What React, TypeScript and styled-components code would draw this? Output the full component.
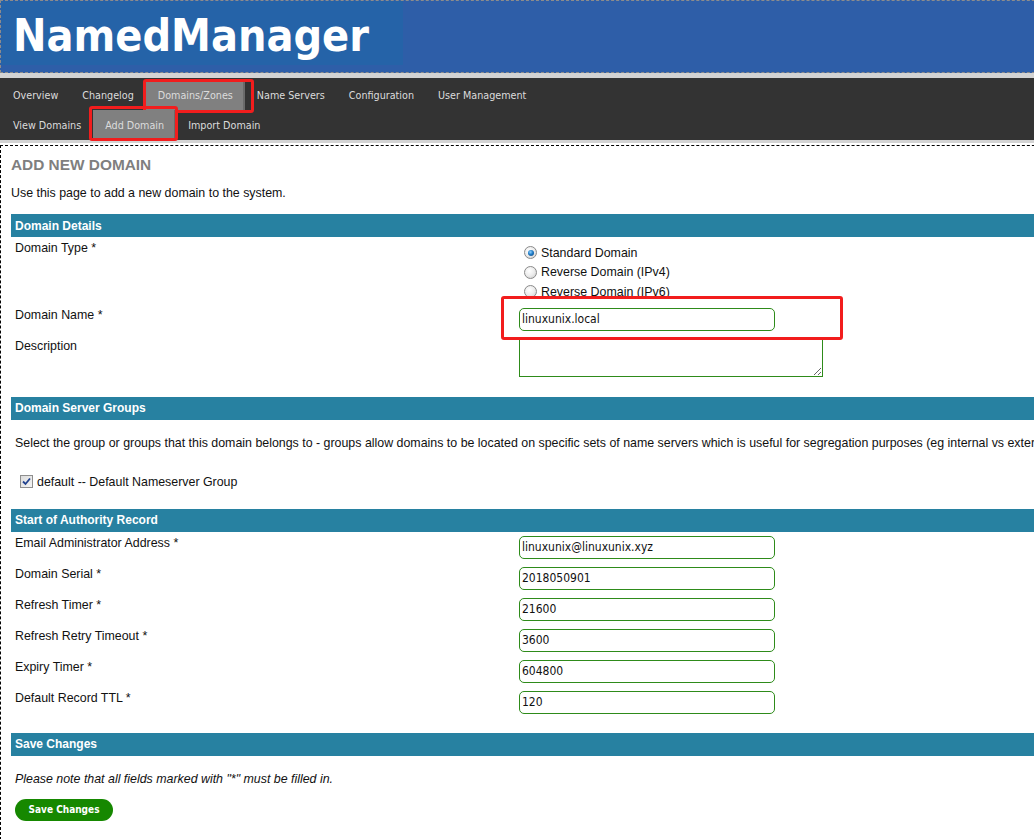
import React from "react";
import styled, { createGlobalStyle } from "styled-components";

const GlobalStyle = createGlobalStyle`
  html, body {
    margin: 0;
    padding: 0;
    background: #ffffff;
    overflow: hidden;
  }
  body {
    font-family: "Liberation Sans", Arial, sans-serif;
    font-size: 12.4px;
    color: #111;
  }
`;

const Page = styled.div`
  width: 1100px;
  min-height: 839px;
  display: flex;
  flex-direction: column;
`;

const Header = styled.header`
  height: 71px;
  border: 1px dashed #8c8c8c;
  background: #2e5ea8;
`;

const Logo = styled.div`
  width: 402px;
  height: 64px;
  box-sizing: border-box;
  padding: 13px 0 0 12px;
  background: #2563a8;
`;

const Title = styled.h1`
  margin: 0;
  font-family: "DejaVu Sans Condensed", "DejaVu Sans", sans-serif;
  font-stretch: condensed;
  font-weight: bold;
  font-size: 44.5px;
  line-height: 44px;
  color: #ffffff;
`;

const NavBand = styled.div`
  background: #d3d3d3;
  padding: 5px 0 3px;
`;

const NavBar = styled.nav`
  background: #333333;
  padding-top: 2px;
`;

const NavRow = styled.div`
  display: flex;
  height: 30px;
  padding-left: 1px;
`;

const NavItem = styled.div<{ $active?: boolean }>`
  position: relative;
  display: flex;
  align-items: center;
  padding: 0 12px;
  font-family: "DejaVu Sans Condensed", "DejaVu Sans", sans-serif;
  font-stretch: condensed;
  font-size: 10.7px;
  color: #dcdcdc;
  background: ${(p) => (p.$active ? "#808080" : "transparent")};
  box-shadow: ${(p) => (p.$active ? "inset -2px 0 0 #6a6a6a" : "none")};
`;

const Highlight = styled.span<{ $t: number; $r: number; $b: number; $l: number }>`
  position: absolute;
  top: ${(p) => p.$t}px;
  right: ${(p) => p.$r}px;
  bottom: ${(p) => p.$b}px;
  left: ${(p) => p.$l}px;
  border: 3px solid #f21d1d;
  border-radius: 3px;
  pointer-events: none;
`;

const Content = styled.main`
  flex: 1;
  margin-top: 2px;
  border-top: 1px dashed #000;
  border-left: 1px dashed #000;
  padding: 10px 0 0 10px;
`;

const Heading = styled.h2`
  margin: 0;
  font-size: 15.4px;
  line-height: 18px;
  font-weight: bold;
  color: #7f7f7f;
`;

const Intro = styled.p`
  margin: 12px 0 14px;
  line-height: 14px;
`;

const Section = styled.section`
  margin-bottom: 15px;
`;

const Bar = styled.div`
  height: 23px;
  display: flex;
  align-items: center;
  padding-left: 4px;
  background: #2781a1;
  color: #ffffff;
  font-weight: bold;
  font-size: 12px;
`;

const FormRow = styled.div`
  display: grid;
  grid-template-columns: 504px 1fr;
`;

const Cell = styled.div<{ $pad?: string }>`
  padding: ${(p) => p.$pad ?? "4px"};
  line-height: 14px;
`;

const RadioLine = styled.label`
  display: flex;
  align-items: center;
  height: 19.5px;
`;

const Radio = styled.span<{ $checked?: boolean }>`
  position: relative;
  width: 11px;
  height: 11px;
  margin: 0 4px 0 5px;
  border-radius: 50%;
  border: 1px solid #8a8a8a;
  background: radial-gradient(circle at 40% 35%, #ffffff 0%, #ececec 50%, #c9c9c9 100%);
  &::after {
    content: "";
    display: ${(p) => (p.$checked ? "block" : "none")};
    position: absolute;
    top: 2.5px;
    left: 2.5px;
    width: 6px;
    height: 6px;
    border-radius: 50%;
    background: radial-gradient(circle at 40% 35%, #8fd0ff 0%, #1f7cc6 45%, #0b3f78 100%);
  }
`;

const TextInput = styled.input`
  display: block;
  box-sizing: border-box;
  width: 256px;
  height: 23px;
  margin: 0;
  padding: 0 2px;
  border: 1px solid #2e8b1a;
  border-radius: 5px;
  font-family: "DejaVu Sans Condensed", "DejaVu Sans", sans-serif;
  font-stretch: condensed;
  font-size: 12px;
  color: #111;
  background: #fff;
  outline: none;
`;

const InputWrap = styled.div`
  position: relative;
  width: 256px;
`;

const TextArea = styled.textarea`
  display: block;
  box-sizing: border-box;
  width: 304px;
  height: 38px;
  margin: 0 0 1px;
  padding: 2px;
  border: 1px solid #2e8b1a;
  border-radius: 0;
  font-family: "DejaVu Sans Condensed", "DejaVu Sans", sans-serif;
  font-size: 12px;
  outline: none;
`;

const Wide = styled.p`
  margin: 12px 0;
  white-space: nowrap;
`;

const CheckLine = styled.label`
  display: flex;
  align-items: center;
  height: 16px;
`;

const CheckBox = styled.span`
  display: flex;
  align-items: center;
  justify-content: center;
  box-sizing: border-box;
  width: 13px;
  height: 13px;
  margin: 0 4px 0 5px;
  border: 1px solid #8e8e8e;
  background: linear-gradient(135deg, #dcdcdc 0%, #f4f4f4 100%);
`;

const Note = styled.p`
  margin: 12px 0 13px;
  font-style: italic;
`;

const SaveButton = styled.button`
  width: 98px;
  height: 22px;
  padding: 0;
  border: none;
  border-radius: 11px;
  background: #168800;
  color: #ffffff;
  font-family: "DejaVu Sans Condensed", "DejaVu Sans", sans-serif;
  font-stretch: condensed;
  font-weight: bold;
  font-size: 10px;
`;

const soaRows: [string, string][] = [
  ["Email Administrator Address *", "linuxunix@linuxunix.xyz"],
  ["Domain Serial *", "2018050901"],
  ["Refresh Timer *", "21600"],
  ["Refresh Retry Timeout *", "3600"],
  ["Expiry Timer *", "604800"],
  ["Default Record TTL *", "120"],
];

export default function App() {
  return (
    <>
      <GlobalStyle />
      <Page>
        <Header>
          <Logo>
            <Title>NamedManager</Title>
          </Logo>
        </Header>
        <NavBand>
          <NavBar>
            <NavRow>
              <NavItem>Overview</NavItem>
              <NavItem>Changelog</NavItem>
              <NavItem $active>
                Domains/Zones
                <Highlight $t={-1} $r={-9} $b={-3} $l={-3} />
              </NavItem>
              <NavItem>Name Servers</NavItem>
              <NavItem>Configuration</NavItem>
              <NavItem>User Management</NavItem>
            </NavRow>
            <NavRow>
              <NavItem>View Domains</NavItem>
              <NavItem $active>
                Add Domain
                <Highlight $t={-4} $r={-2} $b={-1} $l={-4} />
              </NavItem>
              <NavItem>Import Domain</NavItem>
            </NavRow>
          </NavBar>
        </NavBand>
        <Content>
          <Heading>ADD NEW DOMAIN</Heading>
          <Intro>Use this page to add a new domain to the system.</Intro>

          <Section>
            <Bar>Domain Details</Bar>
            <FormRow>
              <Cell>Domain Type *</Cell>
              <Cell $pad="6px 4px 2px">
                <RadioLine>
                  <Radio $checked />
                  Standard Domain
                </RadioLine>
                <RadioLine>
                  <Radio />
                  Reverse Domain (IPv4)
                </RadioLine>
                <RadioLine>
                  <Radio />
                  Reverse Domain (IPv6)
                </RadioLine>
              </Cell>
            </FormRow>
            <FormRow>
              <Cell>Domain Name *</Cell>
              <Cell>
                <InputWrap>
                  <TextInput defaultValue="linuxunix.local" />
                  <Highlight $t={-12} $r={-68} $b={-9} $l={-18} />
                </InputWrap>
              </Cell>
            </FormRow>
            <FormRow>
              <Cell>Description</Cell>
              <Cell>
                <TextArea />
              </Cell>
            </FormRow>
          </Section>

          <Section>
            <Bar>Domain Server Groups</Bar>
            <Cell>
              <Wide>
                Select the group or groups that this domain belongs to - groups allow domains to be located on specific sets of name servers which is useful for segregation purposes (eg internal vs external name servers).
              </Wide>
            </Cell>
            <Cell $pad="8px 4px 4px">
              <CheckLine>
                <CheckBox>
                  <svg width="9" height="9" viewBox="0 0 9 9">
                    <path d="M1 4.5 L3.5 7 L8 1.5" fill="none" stroke="#21428f" strokeWidth="1.8" />
                  </svg>
                </CheckBox>
                default -- Default Nameserver Group
              </CheckLine>
            </Cell>
          </Section>

          <Section>
            <Bar>Start of Authority Record</Bar>
            {soaRows.map(([label, value]) => (
              <FormRow key={label}>
                <Cell>{label}</Cell>
                <Cell>
                  <TextInput defaultValue={value} />
                </Cell>
              </FormRow>
            ))}
          </Section>

          <Section>
            <Bar>Save Changes</Bar>
            <Cell>
              <Note>Please note that all fields marked with "*" must be filled in.</Note>
              <SaveButton>Save Changes</SaveButton>
            </Cell>
          </Section>
        </Content>
      </Page>
    </>
  );
}
